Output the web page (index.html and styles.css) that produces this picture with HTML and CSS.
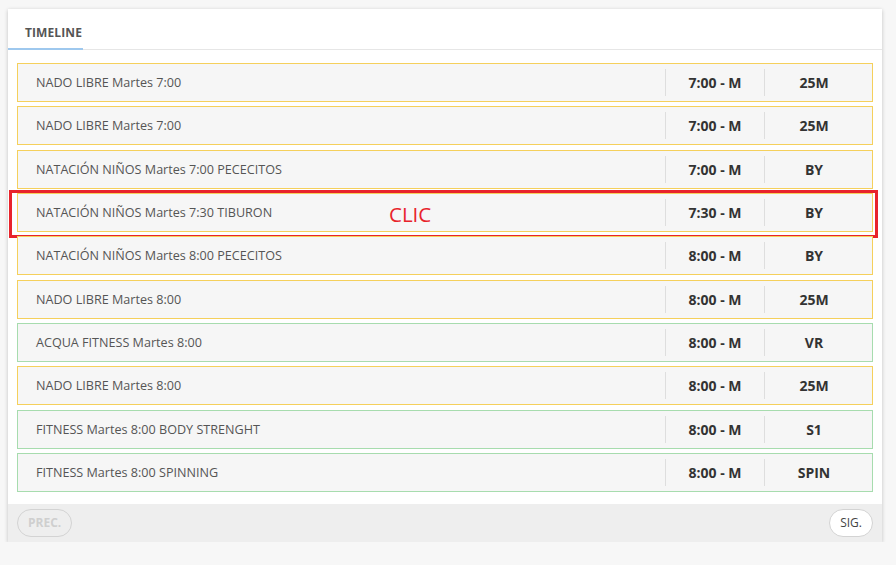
FILE: index.html
```html
<!DOCTYPE html>
<html lang="es">
<head>
<meta charset="utf-8">
<title>Timeline</title>
<link rel="stylesheet" href="styles.css">
</head>
<body>
<div class="card">
  <div class="tabs">
    <div class="tab active">TIMELINE</div>
  </div>
  <div class="list">
    <div class="row yellow"><div class="name">NADO LIBRE Martes 7:00</div><div class="col time">7:00 - M</div><div class="col loc">25M</div></div>
    <div class="row yellow"><div class="name">NADO LIBRE Martes 7:00</div><div class="col time">7:00 - M</div><div class="col loc">25M</div></div>
    <div class="row yellow"><div class="name">NATACIÓN NIÑOS Martes 7:00 PECECITOS</div><div class="col time">7:00 - M</div><div class="col loc">BY</div></div>
    <div class="row yellow marked"><div class="name">NATACIÓN NIÑOS Martes 7:30 TIBURON</div><div class="col time">7:30 - M</div><div class="col loc">BY</div><div class="mark"><span class="clic">CLIC</span></div></div>
    <div class="row yellow"><div class="name">NATACIÓN NIÑOS Martes 8:00 PECECITOS</div><div class="col time">8:00 - M</div><div class="col loc">BY</div></div>
    <div class="row yellow"><div class="name">NADO LIBRE Martes 8:00</div><div class="col time">8:00 - M</div><div class="col loc">25M</div></div>
    <div class="row green"><div class="name">ACQUA FITNESS Martes 8:00</div><div class="col time">8:00 - M</div><div class="col loc">VR</div></div>
    <div class="row yellow"><div class="name">NADO LIBRE Martes 8:00</div><div class="col time">8:00 - M</div><div class="col loc">25M</div></div>
    <div class="row green"><div class="name">FITNESS Martes 8:00 BODY STRENGHT</div><div class="col time">8:00 - M</div><div class="col loc">S1</div></div>
    <div class="row green"><div class="name">FITNESS Martes 8:00 SPINNING</div><div class="col time">8:00 - M</div><div class="col loc">SPIN</div></div>
  </div>
  <div class="footer">
    <button class="btn disabled">PREC.</button>
    <button class="btn">SIG.</button>
  </div>
</div>
</body>
</html>
```
FILE: styles.css
```css
html, body {
  margin: 0;
  padding: 0;
  background: #f7f7f7;
}
body {
  padding: 9px 14px 0 8px;
  font-family: "Open Sans", "Liberation Sans", sans-serif;
}
.card {
  width: 874px;
  background: #fff;
  box-shadow: 0 1px 4px rgba(0,0,0,0.22);
}
.tabs {
  display: flex;
  height: 40px;
  border-bottom: 1px solid #e6e6e6;
}
.tab {
  padding: 0 17px;
  display: flex;
  align-items: center;
  font-size: 12px;
  font-weight: 700;
  color: #555;
  letter-spacing: 0.1px;
  border-bottom: 2px solid #9ec8ee;
  margin-bottom: -1px;
  padding-top: 7px;
  width: 41px;
  box-sizing: content-box;
}
.list {
  padding: 13px 9px 12px 9px;
  display: flex;
  flex-direction: column;
  gap: 4.33px;
}
.row {
  position: relative;
  height: 39px;
  box-sizing: border-box;
  display: flex;
  align-items: stretch;
  background: #f6f6f6;
  border: 1px solid #f5d05c;
  padding-right: 9px;
}
.row.green {
  border-color: #a7dcae;
}
.name {
  flex: 1;
  display: flex;
  align-items: center;
  padding-left: 18px;
  font-size: 12.6px;
  color: #555;
}
.col {
  width: 98px;
  margin: 5px 0;
  border-left: 1px solid #dedede;
  display: flex;
  align-items: center;
  justify-content: center;
  font-size: 14px;
  font-weight: 700;
  color: #333;
}
.mark {
  position: absolute;
  left: -9px;
  top: -4px;
  right: -6px;
  bottom: -7px;
  border: 3px solid #e8232b;
  pointer-events: none;
}
.clic {
  position: absolute;
  left: 377px;
  top: 7px;
  font-family: "Open Sans", "Liberation Sans", sans-serif;
  font-size: 20.5px;
  color: #e8232b;
}
.footer {
  height: 38px;
  background: #eeeeee;
  display: flex;
  justify-content: space-between;
  align-items: center;
  padding: 0 9px;
}
.btn {
  height: 28px;
  padding: 0 10px;
  border-radius: 14px;
  border: 1px solid #d3d3d3;
  background: #fff;
  font-family: "Open Sans", "Liberation Sans", sans-serif;
  font-size: 12px;
  color: #444;
  cursor: pointer;
}
.btn.disabled {
  background: transparent;
  color: #cfcfcf;
  font-weight: 700;
}
```
